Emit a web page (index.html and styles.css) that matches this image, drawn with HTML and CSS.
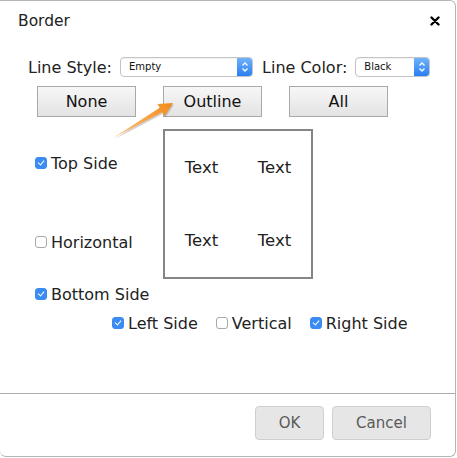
FILE: index.html
```html
<!DOCTYPE html>
<html lang="en">
<head>
    <meta charset="UTF-8">
    <meta name="viewport" content="width=device-width, initial-scale=1.0">
    <title>Border</title>
    <link rel="stylesheet" href="styles.css">
</head>
<body>

    <div class="dialog">
        <!-- Title bar -->
        <header class="dialog-header">
            <h1>Border</h1>
            <button class="close-btn" aria-label="Close">
                <svg width="10" height="10" viewBox="0 0 10 10">
                    <path d="M1.5 1.5 L8.5 8.5 M8.5 1.5 L1.5 8.5" stroke="#000" stroke-width="2.4" stroke-linecap="round"/>
                </svg>
            </button>
        </header>

        <div class="dialog-body">
            <!-- Line style / color pickers -->
            <div class="style-row">
                <span class="field-label">Line Style:</span>
                <div class="select select-style">
                    <span class="select-value">Empty</span>
                    <span class="select-arrow">
                        <svg width="8" height="12" viewBox="0 0 8 12">
                            <path d="M1.5 4.5 L4 2 L6.5 4.5 M1.5 7.5 L4 10 L6.5 7.5" fill="none" stroke="#fff" stroke-width="1.3"/>
                        </svg>
                    </span>
                </div>
                <span class="field-label label-color">Line Color:</span>
                <div class="select select-color">
                    <span class="select-value">Black</span>
                    <span class="select-arrow">
                        <svg width="8" height="12" viewBox="0 0 8 12">
                            <path d="M1.5 4.5 L4 2 L6.5 4.5 M1.5 7.5 L4 10 L6.5 7.5" fill="none" stroke="#fff" stroke-width="1.3"/>
                        </svg>
                    </span>
                </div>
            </div>

            <!-- Presets -->
            <div class="preset-row">
                <button class="preset-btn">None</button>
                <button class="preset-btn">Outline</button>
                <button class="preset-btn">All</button>
            </div>

            <!-- Sides + preview -->
            <div class="sides">
                <div class="side-col">
                    <label class="check"><span class="box checked"></span>Top Side</label>
                    <label class="check check-horizontal"><span class="box"></span>Horizontal</label>
                </div>
                <div class="preview">
                    <span>Text</span>
                    <span>Text</span>
                    <span>Text</span>
                    <span>Text</span>
                </div>
            </div>

            <label class="check bottom-side"><span class="box checked"></span>Bottom Side</label>

            <div class="side-row">
                <label class="check"><span class="box checked"></span>Left Side</label>
                <label class="check"><span class="box"></span>Vertical</label>
                <label class="check"><span class="box checked"></span>Right Side</label>
            </div>

            <!-- pointer to the Outline preset -->
            <svg class="hint-arrow" width="72" height="46" viewBox="108 98 72 46">
                <defs>
                    <linearGradient id="arrowFill" x1="113" y1="137" x2="173" y2="103" gradientUnits="userSpaceOnUse">
                        <stop offset="0" stop-color="#fcc47e"/>
                        <stop offset="1" stop-color="#f3891a"/>
                    </linearGradient>
                </defs>
                <polygon points="113,138 159.7,107.8 157.5,104 173,103 164.5,116 162.3,112.2" fill="rgba(0,0,0,0.18)" transform="translate(1,1.5)"/>
                <polygon points="113,138 159.7,107.8 157.5,104 173,103 164.5,116 162.3,112.2" fill="url(#arrowFill)"/>
            </svg>
        </div>

        <footer class="dialog-footer">
            <button class="footer-btn btn-ok">OK</button>
            <button class="footer-btn btn-cancel">Cancel</button>
        </footer>
    </div>

</body>
</html>
```

FILE: styles.css
```css
body {
    margin: 0;
    font-family: "DejaVu Sans", Verdana, sans-serif;
    color: #222;
    background-color: #fff;
}

.dialog {
    width: 455px;
    height: 455px;
    display: flex;
    flex-direction: column;
    border: 1px solid #b5b5b5;
    border-left: none;
    border-radius: 0 6px 6px 6px;
    background-color: #fff;
    position: relative;
}

.dialog-header {
    height: 39px;
    display: flex;
    align-items: center;
    justify-content: space-between;
    padding: 0 14px 0 18px;
}

.dialog-header h1 {
    margin: 0;
    font-size: 15.5px;
    font-weight: normal;
    color: #222;
}

.close-btn {
    border: none;
    background: none;
    padding: 0;
    width: 12px;
    height: 12px;
    display: flex;
    align-items: center;
    justify-content: center;
}

.dialog-body {
    position: relative;
    padding-left: 28px;
}

/* Line style row */
.style-row {
    margin-top: 17px;
    height: 20px;
    display: flex;
    align-items: center;
}

.field-label {
    font-size: 16px;
    color: #222;
    margin-right: 8px;
}

.label-color {
    margin-left: 9px;
}

.select {
    height: 18px;
    display: flex;
    align-items: stretch;
    border: 1px solid #c4c4c4;
    border-radius: 4px;
    background-color: #fff;
    box-shadow: inset 0 1px 1px rgba(0, 0, 0, 0.06);
    overflow: hidden;
}

.select-style {
    width: 131px;
}

.select-color {
    width: 73px;
}

.select-value {
    flex: 1;
    font-size: 10px;
    line-height: 18px;
    padding-left: 8px;
    color: #111;
}

.select-arrow {
    width: 15px;
    display: flex;
    align-items: center;
    justify-content: center;
    background: linear-gradient(#6fb3fb, #2a7ef2);
}

/* Preset buttons */
.preset-row {
    margin-top: 9px;
    padding-left: 9px;
    display: flex;
    gap: 27px;
}

.preset-btn {
    width: 99px;
    height: 31px;
    padding: 0;
    font-family: inherit;
    font-size: 16px;
    color: #111;
    border: 1px solid #a9a9a9;
    border-radius: 0;
    background: linear-gradient(#f7f7f7, #e3e3e3);
}

/* Sides and preview */
.sides {
    margin-top: 12px;
    display: flex;
}

.side-col {
    width: 128px;
    padding-left: 7px;
    padding-top: 25px;
    display: flex;
    flex-direction: column;
}

.check {
    display: flex;
    align-items: center;
    gap: 4px;
    height: 18px;
    font-size: 16px;
    color: #222;
    white-space: nowrap;
}

.check-horizontal {
    margin-top: 61px;
}

.box {
    width: 10px;
    height: 10px;
    border: 1px solid #a8a8a8;
    border-radius: 3px;
    background-color: #fff;
    position: relative;
    flex-shrink: 0;
}

.box.checked {
    border-color: #3a8cf2;
    background-color: #3a8cf2;
}

.box.checked::after {
    content: "";
    position: absolute;
    left: 3px;
    top: 1px;
    width: 3px;
    height: 5px;
    border-right: 1.5px solid #fff;
    border-bottom: 1.5px solid #fff;
    transform: rotate(40deg);
}

.preview {
    width: 146px;
    height: 146px;
    border: 2px solid #858585;
    display: grid;
    grid-template-columns: 1fr 1fr;
    grid-template-rows: 1fr 1fr;
    place-items: center;
    font-size: 16.5px;
    color: #222;
}

.bottom-side {
    margin-top: 6px;
    padding-left: 7px;
}

.side-row {
    margin-top: 11px;
    padding-left: 84px;
    display: flex;
    gap: 18px;
}

.hint-arrow {
    position: absolute;
    left: 108px;
    top: 58px;
}

/* Footer */
.dialog-footer {
    margin-top: auto;
    height: 63px;
    border-top: 1px solid #ababab;
    display: flex;
    justify-content: flex-end;
    gap: 8px;
    padding: 12px 24px 0 0;
    box-sizing: border-box;
}

.footer-btn {
    height: 34px;
    padding: 0;
    font-family: inherit;
    font-size: 15px;
    color: #5a5a5a;
    background-color: #e6e6e6;
    border: 1px solid #cfcfcf;
    border-radius: 4px;
}

.btn-ok {
    width: 69px;
}

.btn-cancel {
    width: 99px;
}
```
